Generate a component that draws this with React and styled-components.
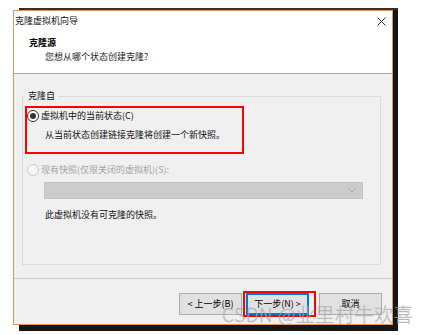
import React from "react";
import styled, { createGlobalStyle, css } from "styled-components";

const GlobalStyle = createGlobalStyle`
  html, body { margin: 0; padding: 0; background: #ffffff; }
  body { font-family: "Noto Sans CJK SC", "Noto Sans", sans-serif; }
  * { box-sizing: border-box; }
`;

const Desktop = styled.div`
  position: relative;
  width: 430px;
  height: 335px;
  overflow: hidden;
  background: #ffffff;
`;

const BackWindow = styled.div`
  position: absolute;
  left: 19px;
  top: 8px;
  width: 379px;
  height: 323px;
  background: #151515;
  border-top: 2px solid #303030;
`;

const Dialog = styled.div`
  position: absolute;
  left: 13px;
  top: 10px;
  width: 380px;
  height: 315px;
  border: 1px solid #e19558;
  background: #f0f0f0;
  display: flex;
  flex-direction: column;
  font-size: 9px;
  line-height: 12px;
  color: #000;
`;

const Header = styled.div`
  background: #ffffff;
  height: 63px;
  border-bottom: 1px solid #a7a7a7;
  flex: none;
`;

const TitleBar = styled.div`
  height: 20px;
  display: flex;
  align-items: center;
  justify-content: space-between;
  padding: 0 6px 0 1px;
`;

const Title = styled.span`
  font-size: 9px;
  line-height: 12px;
  color: #111;
`;

const HeaderBody = styled.div`
  padding: 6px 0 0 15px;
`;

const PageTitle = styled.div`
  font-weight: 700;
  line-height: 12px;
  color: #000;
`;

const PageSub = styled.div`
  margin-top: 2px;
  padding-left: 16px;
  line-height: 12px;
  color: #222;
`;

const Content = styled.div`
  height: 204px;
  flex: none;
  display: flex;
  flex-direction: column;
  padding: 16px 11px 13px 8px;
`;

const Group = styled.fieldset`
  flex: 1;
  margin: 0;
  min-width: 0;
  border: 1px solid #dcdcdc;
  padding: 0 2px;
`;

const Legend = styled.legend`
  padding: 0 3px;
  line-height: 12px;
  color: #111;
`;

const Mark = styled.div`
  margin-top: 4px;
  width: 219px;
  border: 2px solid #ff0000;
  padding: 1px 0 10px 0;
`;

const RadioRow = styled.div`
  display: flex;
  align-items: center;
  gap: 2px;
  height: 14px;
  padding-left: ${(p) => p.$indent || 0}px;
  margin-top: ${(p) => p.$top || 0}px;
  color: ${(p) => (p.$disabled ? "#a3a3a3" : "#111")};
`;

const RadioCircle = styled.span`
  width: 12px;
  height: 12px;
  border-radius: 50%;
  flex: none;
  display: flex;
  align-items: center;
  justify-content: center;
  ${(p) =>
    p.$disabled
      ? css`
          border: 1px solid #cccccc;
          background: #f6f6f6;
        `
      : css`
          border: 1px solid #333333;
          background: #ffffff;
        `}
  &::after {
    content: "";
    width: 6px;
    height: 6px;
    border-radius: 50%;
    background: ${(p) => (p.$checked ? "#333333" : "transparent")};
  }
`;

const Desc = styled.div`
  margin-top: 5px;
  padding-left: 18px;
  line-height: 14px;
  color: #111;
`;

const Select = styled.div`
  margin: 5px 0 0 19px;
  width: 319px;
  height: 17px;
  background: #cccccc;
  border: 1px solid #c4c4c4;
  display: flex;
  align-items: center;
  justify-content: flex-end;
  padding-right: 6px;
`;

const Note = styled.div`
  margin-top: 9px;
  padding-left: 20px;
  line-height: 14px;
  color: #111;
`;

const Footer = styled.div`
  flex: 1;
  border-top: 1px solid #cbcbcb;
  display: flex;
  justify-content: flex-end;
  align-items: center;
  padding: 5px 10px 0 0;
`;

const Button = styled.div`
  width: 63px;
  height: 22px;
  background: #e1e1e1;
  border: 1px solid #adadad;
  display: flex;
  align-items: center;
  justify-content: center;
  font-size: 9px;
  color: #000;
  flex: none;
  ${(p) =>
    p.$primary &&
    css`
      border-color: #0078d7;
      box-shadow: inset 0 0 0 1px #0078d7;
    `}
`;

const ButtonMark = styled.div`
  border: 2px solid #ff0000;
  padding: 0 5px 0 1px;
  margin: 0 3px 0 1px;
  flex: none;
`;

const Watermark = styled.div`
  position: absolute;
  left: 222px;
  top: 302px;
  font-family: "Noto Sans CJK SC", "Noto Sans", sans-serif;
  font-size: 19px;
  line-height: 24px;
  font-weight: 300;
  letter-spacing: 0.6px;
  color: rgba(190, 190, 190, 0.7);
  -webkit-text-stroke: 0.4px rgba(140, 140, 140, 0.55);
  white-space: nowrap;
`;

const CloseIcon = () => (
  <svg width="9" height="9" viewBox="0 0 9 9">
    <path d="M0.5 0.5 L8.5 8.5 M8.5 0.5 L0.5 8.5" stroke="#333" strokeWidth="1" />
  </svg>
);

const Chevron = () => (
  <svg width="8" height="5" viewBox="0 0 8 5">
    <path d="M0.5 0.5 L4 4 L7.5 0.5" fill="none" stroke="#a8a8a8" strokeWidth="1" />
  </svg>
);

export default function App() {
  return (
    <>
      <GlobalStyle />
      <Desktop>
        <BackWindow />
        <Dialog>
          <Header>
            <TitleBar>
              <Title>克隆虚拟机向导</Title>
              <CloseIcon />
            </TitleBar>
            <HeaderBody>
              <PageTitle>克隆源</PageTitle>
              <PageSub>您想从哪个状态创建克隆?</PageSub>
            </HeaderBody>
          </Header>
          <Content>
            <Group>
              <Legend>克隆自</Legend>
              <Mark>
                <RadioRow>
                  <RadioCircle $checked />
                  <span>虚拟机中的当前状态(C)</span>
                </RadioRow>
                <Desc>从当前状态创建链接克隆将创建一个新快照。</Desc>
              </Mark>
              <RadioRow $disabled $indent={2} $top={9}>
                <RadioCircle $disabled />
                <span>现有快照(仅限关闭的虚拟机)(S):</span>
              </RadioRow>
              <Select>
                <Chevron />
              </Select>
              <Note>此虚拟机没有可克隆的快照。</Note>
            </Group>
          </Content>
          <Footer>
            <Button>&lt; 上一步(B)</Button>
            <ButtonMark>
              <Button $primary>下一步(N) &gt;</Button>
            </ButtonMark>
            <Button>取消</Button>
          </Footer>
        </Dialog>
        <Watermark>CSDN @业里村牛欢喜</Watermark>
      </Desktop>
    </>
  );
}
